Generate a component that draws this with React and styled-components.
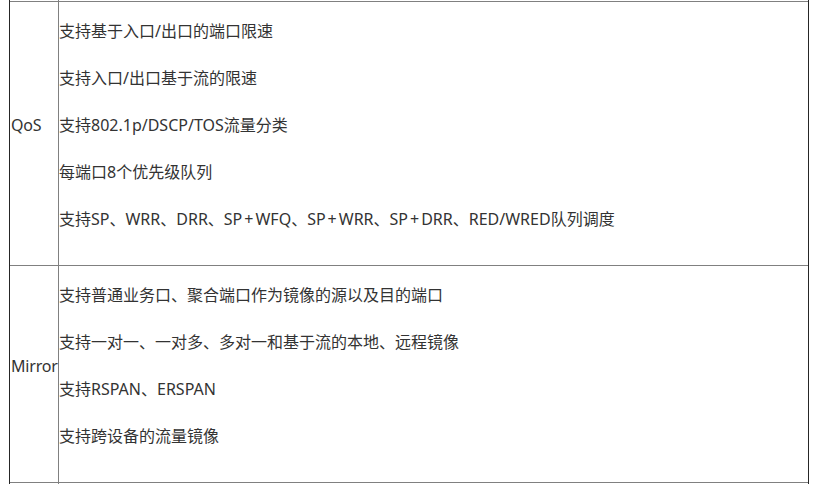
import styled, { createGlobalStyle } from "styled-components";

const GlobalStyle = createGlobalStyle`
  html, body {
    margin: 0;
    padding: 0;
    background-color: #ffffff;
  }
  body {
    font-family: "Noto Sans", "Noto Sans CJK SC", sans-serif;
    color: #333333;
  }
`

const Frame = styled.div`
  margin-left: 9px;
  width: 798px;
  height: 484px;
  border-left: 1px solid #262626;
  border-right: 1px solid #262626;
  display: flex;
  flex-direction: column;
  overflow: hidden;
`

const Row = styled.div`
  display: grid;
  grid-template-columns: 48px 1fr;
  border-top: ${({ $noTop }) => ($noTop ? "none" : "1px solid #808080")};
  height: ${({ $height }) => $height || "auto"};
  flex: ${({ $fill }) => ($fill ? "1" : "none")};
`

const Label = styled.div`
  display: flex;
  align-items: center;
  padding: 17px 0 34px 1px;
  font-size: 16px;
  line-height: 24px;
  letter-spacing: -0.2px;
  white-space: nowrap;
`

const Content = styled.div`
  border-left: 1px solid #808080;
  display: flex;
  flex-direction: column;
  gap: 23px;
  padding: ${({ $empty }) => ($empty ? "0" : "17px 0 34px 0")};
`

const Line = styled.p`
  margin: 0;
  font-size: 16px;
  line-height: 24px;
  white-space: nowrap;
`

// the reference font draws "+" wider than Noto Sans does
const Plus = styled.span`
  padding: 0 2px;
`

const rows = [
    {
        label: "QoS",
        items: [
            "支持基于入口/出口的端口限速",
            "支持入口/出口基于流的限速",
            "支持802.1p/DSCP/TOS流量分类",
            "每端口8个优先级队列",
            "支持SP、WRR、DRR、SP+WFQ、SP+WRR、SP+DRR、RED/WRED队列调度",
        ],
    },
    {
        label: "Mirror",
        items: [
            "支持普通业务口、聚合端口作为镜像的源以及目的端口",
            "支持一对一、一对多、多对一和基于流的本地、远程镜像",
            "支持RSPAN、ERSPAN",
            "支持跨设备的流量镜像",
        ],
    },
]

const renderText = (text) =>
    text.split("+").flatMap((part, i) =>
        i === 0 ? [part] : [<Plus key={i}>+</Plus>, part]
    )

export default function App() {
    return (
        <>
            <GlobalStyle/>
            <Frame>
                <Row $noTop $height="1px">
                    <div/>
                    <Content $empty/>
                </Row>
                {rows.map((row) => (
                    <Row key={row.label}>
                        <Label>{row.label}</Label>
                        <Content>
                            {row.items.map((item) => (
                                <Line key={item}>{renderText(item)}</Line>
                            ))}
                        </Content>
                    </Row>
                ))}
                <Row $fill>
                    <div/>
                    <Content $empty/>
                </Row>
            </Frame>
        </>
    )
}
